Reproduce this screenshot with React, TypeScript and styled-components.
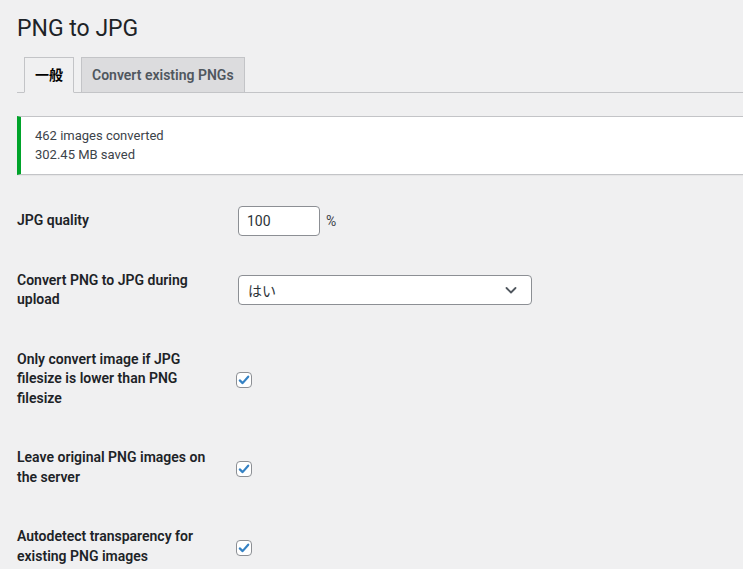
import styled, { createGlobalStyle } from 'styled-components';

const Global = createGlobalStyle`
  html, body { margin: 0; background: #f0f0f1; overflow: hidden; }
  body {
    font-family: Roboto, "Noto Sans CJK JP", sans-serif;
    font-size: 13px;
    color: #3c434a;
  }
`;

type Row =
  | { kind: 'number'; label: string; value: string; unit: string }
  | { kind: 'select'; label: string; value: string }
  | { kind: 'check'; label: string; checked: boolean };

const rows: Row[] = [
  { kind: 'number', label: 'JPG quality', value: '100', unit: '%' },
  { kind: 'select', label: 'Convert PNG to JPG during upload', value: 'はい' },
  { kind: 'check', label: 'Only convert image if JPG filesize is lower than PNG filesize', checked: true },
  { kind: 'check', label: 'Leave original PNG images on the server', checked: true },
  { kind: 'check', label: 'Autodetect transparency for existing PNG images', checked: true },
];

function Chevron() {
  return (
    <svg width="16" height="16" viewBox="0 0 16 16" fill="none">
      <path d="M3.5 6l4.5 4.5L12.5 6" stroke="#50575e" strokeWidth="1.8" strokeLinecap="round" strokeLinejoin="round" />
    </svg>
  );
}

function Field({ row }: { row: Row }) {
  if (row.kind === 'number') {
    return (
      <>
        <NumberInput type="text" defaultValue={row.value} />
        <Unit>{row.unit}</Unit>
      </>
    );
  }
  if (row.kind === 'select') {
    return (
      <SelectBox>
        <span>{row.value}</span>
        <Chevron />
      </SelectBox>
    );
  }
  return (
    <CheckBox>
      {row.checked && (
        <svg width="12" height="12" viewBox="0 0 12 12" fill="none">
          <path d="M1.8 6.4l2.8 2.7 5.6-6.4" stroke="#3582c4" strokeWidth="2.2" strokeLinecap="round" strokeLinejoin="round" />
        </svg>
      )}
    </CheckBox>
  );
}

export default function App() {
  return (
    <Wrap>
      <Global />
      <Title>PNG to JPG</Title>
      <Tabs>
        <Tab $active>一般</Tab>
        <Tab>Convert existing PNGs</Tab>
      </Tabs>

      <Notice>
        462 images converted
        <br />
        302.45 MB saved
      </Notice>

      <FormTable>
        {rows.map((row) => (
          <FormRow key={row.label}>
            <Label>{row.label}</Label>
            <Control>
              <Field row={row} />
            </Control>
          </FormRow>
        ))}
      </FormTable>
    </Wrap>
  );
}

const Wrap = styled.div`
  padding: 5px 0 0 17px;
`;

const Title = styled.h1`
  margin: 0;
  padding: 9px 0 4px;
  font-size: 23px;
  font-weight: 400;
  line-height: 1.3;
  color: #1d2327;
`;

const Tabs = styled.nav`
  display: flex;
  padding-top: 9px;
  border-bottom: 1px solid #c3c4c7;
`;

const Tab = styled.div<{ $active?: boolean }>`
  margin-left: 7px;
  margin-bottom: -1px;
  padding: 5px 10px;
  font-size: 14px;
  font-weight: 600;
  line-height: 24px;
  border: 1px solid #c3c4c7;
  border-bottom: 1px solid ${(p) => (p.$active ? '#f0f0f1' : '#c3c4c7')};
  background: ${(p) => (p.$active ? '#f0f0f1' : '#dcdcde')};
  color: ${(p) => (p.$active ? '#000' : '#50575e')};
`;

const Notice = styled.div`
  margin-top: 23px;
  padding: 9px 14px;
  background: #fff;
  border: 1px solid #c3c4c7;
  border-left: 4px solid #00a32a;
  border-right: none;
  box-shadow: 0 1px 1px rgba(0, 0, 0, 0.04);
  line-height: 19.5px;
  color: #3c434a;
`;

const FormTable = styled.div`
  margin-top: 16px;
  display: flex;
  flex-direction: column;
`;

const FormRow = styled.div`
  display: grid;
  grid-template-columns: 200px 1fr;
  column-gap: 10px;
`;

const Label = styled.div`
  padding: 20px 0;
  font-size: 14px;
  font-weight: 600;
  line-height: 19.5px;
  color: #1d2327;
`;

const Control = styled.div`
  display: flex;
  align-items: center;
  gap: 6px;
  padding: 15px 11px;
`;

const NumberInput = styled.input`
  box-sizing: border-box;
  width: 82px;
  height: 30px;
  padding: 0 8px;
  font: inherit;
  font-size: 14px;
  color: #2c3338;
  background: #fff;
  border: 1px solid #8c8f94;
  border-radius: 4px;
  outline: none;
`;

const Unit = styled.span`
  font-size: 14px;
  color: #3c434a;
`;

const SelectBox = styled.div`
  box-sizing: border-box;
  width: 294px;
  height: 30px;
  display: flex;
  align-items: center;
  justify-content: space-between;
  padding: 0 12px 0 9px;
  font-size: 14px;
  color: #2c3338;
  background: #fff;
  border: 1px solid #8c8f94;
  border-radius: 4px;
`;

const CheckBox = styled.span`
  box-sizing: border-box;
  width: 16px;
  height: 16px;
  margin: 2px 0 0 -2px;
  display: inline-flex;
  align-items: center;
  justify-content: center;
  background: #fff;
  border: 1px solid #8c8f94;
  border-radius: 4px;
`;
